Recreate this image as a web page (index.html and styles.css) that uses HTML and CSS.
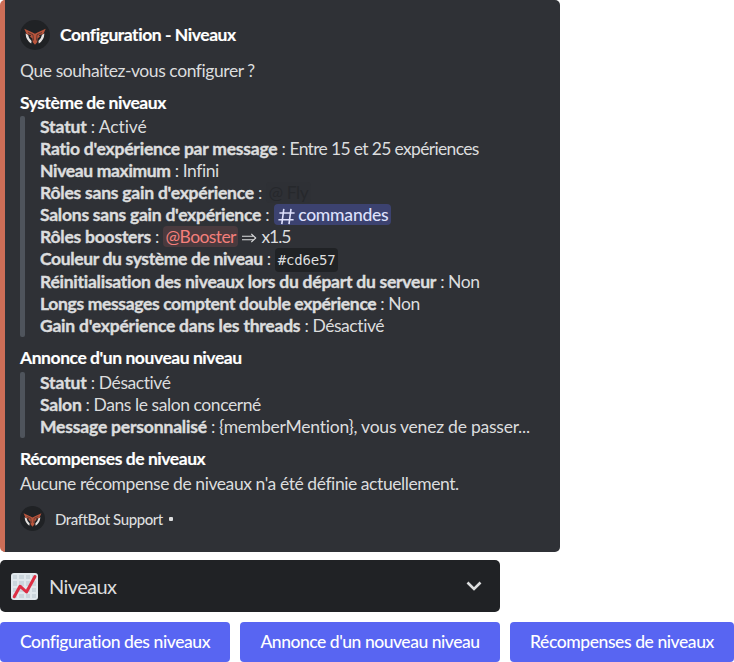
FILE: index.html
```html
<!DOCTYPE html>
<html lang="fr">
<head>
<meta charset="utf-8">
<title>Configuration - Niveaux</title>
<link rel="stylesheet" href="styles.css">
</head>
<body>
<svg class="defs" width="0" height="0">
  <symbol id="owl" viewBox="0 0 30 30">
    <circle cx="15" cy="15" r="15" fill="#202225"/>
    <path d="M5.6 13.5 Q5.8 20 11.2 23.6 L11.6 21 Q8.6 18.6 8 14.8Z M24.4 13.5 Q24.2 20 18.8 23.6 L18.4 21 Q21.4 18.6 22 14.8Z" fill="#e4e1df"/>
    <path d="M4.3 8.8 L12 12.2 L15 13.8 L18 12.2 L25.7 8.8 L23.4 14 L18.8 15.2 L20 16.6 L17.6 18.4 L17.2 22.2 L15 24.8 L12.8 22.2 L12.4 18.4 L10 16.6 L11.2 15.2 L6.6 14Z" fill="#b9553c"/>
    <path d="M8 12.5 L13 14.8 L13.5 20.5 M22 12.5 L17 14.8 L16.5 20.5" fill="none" stroke="#49302d" stroke-width=".8"/>
  </symbol>
</svg>
<section class="embed">
  <header class="author"><svg class="avatar"><use href="#owl"/></svg><span class="heading">Configuration - Niveaux</span></header>
  <p class="description">Que souhaitez-vous configurer ?</p>

  <h2 class="heading">Système de niveaux</h2>
  <div class="quote">
    <p><b class="loose">Statut</b> : <span class="loose">Activé</span></p>
    <p><b>Ratio d'expérience par message</b> : <span class="numeric">Entre 15 et 25 expériences</span></p>
    <p><b class="snug">Niveau maximum</b> : Infini</p>
    <p><b>Rôles sans gain d'expérience</b> : <span class="mention dark">@ Fly</span></p>
    <p><b class="even">Salons sans gain d'expérience</b> : <span class="mention channel"><svg class="hash" viewBox="0 0 17 17"><path d="M5.8 .8 3.8 16.2M13 .8 11 16.2M1.4 5H16.6M.4 11.8H15.6"/></svg>commandes</span></p>
    <p><b>Rôles boosters</b> : <span class="mention booster">@Booster</span> <svg class="implies" viewBox="0 0 15 10"><path d="M0 3.2H11.5M0 6.8H11.5M9.3 .8 13.7 5 9.3 9.2"/></svg> <span class="factor">x1.5</span></p>
    <p class="code-row"><b class="tight">Couleur du système de niveau</b> : <code>#cd6e57</code></p>
    <p><b class="even">Réinitialisation des niveaux lors du départ du serveur</b> : Non</p>
    <p><b class="tight">Longs messages comptent double expérience</b> : Non</p>
    <p><b>Gain d'expérience dans les threads</b> : Désactivé</p>
  </div>

  <h2 class="heading">Annonce d'un nouveau niveau</h2>
  <div class="quote lower">
    <p><b class="loose">Statut</b> : Désactivé</p>
    <p><b>Salon</b> : Dans le salon concerné</p>
    <p><b class="message">Message personnalisé</b> : <span class="template">{memberMention}, vous venez de passer...</span></p>
  </div>

  <h2 class="heading">Récompenses de niveaux</h2>
  <p class="empty">Aucune récompense de niveaux n'a été définie actuellement.</p>
  <footer><svg class="avatar small"><use href="#owl"/></svg><span>DraftBot Support</span><i class="dot"></i></footer>
</section>

<div class="select">
  <svg class="chart" viewBox="0 0 27 27">
    <rect width="27" height="27" rx="3" fill="#e1e8ed"/>
    <path d="M2 2h4v4H2zM8 2h5v4H8zM15 2h4v4h-4zM21 2h4v4h-4zM2 8h4v5H2zM8 8h5v5H8zM15 8h4v5h-4zM21 8h4v5h-4zM2 15h4v4H2zM8 15h5v4H8zM15 15h4v4h-4zM21 15h4v4h-4zM2 21h4v4H2zM8 21h5v4H8zM15 21h4v4h-4zM21 21h4v4h-4z" fill="#ccd6dd"/>
    <path d="M3.2 23.8 9 13.2 15.5 19 24 3.5" fill="none" stroke="#dd2e44" stroke-width="3" stroke-linecap="round" stroke-linejoin="round"/>
  </svg>
  <span class="choice">Niveaux</span>
  <svg class="chevron" viewBox="0 0 16 10"><path d="M1.5 1.5 8 8 14.5 1.5"/></svg>
</div>

<div class="buttons">
  <button>Configuration des niveaux</button>
  <button class="wide">Annonce d'un nouveau niveau</button>
  <button>Récompenses de niveaux</button>
</div>
</body>
</html>
```
FILE: styles.css
```css
* { box-sizing: border-box; }
body {
  margin: 0;
  width: 734px;
  background: #fff;
  color: #dcddde;
  font: 17.5px/22px Lato, "Open Sans", sans-serif;
  letter-spacing: -.43px;
  font-variant-ligatures: none;
}
p, h2 { margin: 0; white-space: nowrap; }
svg { display: block; flex: none; }
.defs { position: absolute; }

.embed {
  height: 552px;
  padding: 20px 15px 0;
  background: #2f3136;
  border-left: 5px solid #cd6e57;
  border-radius: 5px;
  width: 560px;
}
.author { display: flex; align-items: center; gap: 10px; height: 30px; }
.avatar { width: 30px; height: 30px; }
.heading { font-size: 17.5px; line-height: 22px; font-weight: 700; color: #fff; letter-spacing: -.45px; -webkit-text-stroke: .15px; }
.description { margin: 10px 0; }
.quote {
  position: relative;
  margin: 2px 0 10px;
  padding-left: 20px;
}
.lower { margin-top: 3px; }
.quote::before {
  content: "";
  position: absolute;
  inset: 0 auto 0 0;
  width: 5px;
  border-radius: 2px;
  background: #4f545c;
}
.quote p { height: 22px; }
.quote .code-row { height: 23px; }
b { letter-spacing: -.22px; -webkit-text-stroke: .4px; }
.loose { letter-spacing: -.1px; }
.even { letter-spacing: -.25px; }
.snug { letter-spacing: -.34px; }
.tight { letter-spacing: -.35px; }
.message { letter-spacing: -.18px; }
.numeric { letter-spacing: -.66px; }
.factor { letter-spacing: -1.1px; }
.template { letter-spacing: -.23px; }

.mention { display: inline-block; height: 21px; line-height: 21px; padding: 0 2.5px; border-radius: 4px; }
.dark { color: #26282c; background: #2e3035; }
.channel { color: #dee0fc; background: #3c4270; font-weight: 500; letter-spacing: -.22px; padding-left: 4px; margin-left: 1px; }
.booster { color: #f47f7b; background: #4a3a3e; letter-spacing: -.6px; }
.hash { display: inline-block; width: 17px; height: 17px; margin-right: 3px; vertical-align: -4px; }
.hash path { fill: none; stroke: currentColor; stroke-width: 1.6; }
.implies { display: inline-block; width: 15px; height: 10px; vertical-align: 0; }
.implies path { fill: none; stroke: #dcddde; stroke-width: 1.1; }
code {
  display: inline-block;
  height: 24px;
  padding: 0 3px;
  border-radius: 4px;
  background: #202225;
  font: 14px/24px "DejaVu Sans Mono", monospace;
  letter-spacing: -.2px;
}
.empty { margin-top: 3px; }
footer { display: flex; align-items: center; gap: 10px; margin-top: 11px; font-size: 15px; font-weight: 500; }
.small { width: 25px; height: 25px; }
.dot { width: 4px; height: 4px; margin-left: -4px; border-radius: 1px; background: #dcddde; }

.select {
  display: flex;
  align-items: center;
  width: 500px;
  height: 52px;
  margin-top: 8px;
  padding: 0 18px 0 11px;
  border-radius: 5px;
  background: #202225;
  font-size: 20px;
  letter-spacing: -.6px;
}
.chart { width: 27px; height: 27px; margin-right: 11px; }
.choice { margin-top: -1px; }
.chevron { width: 16px; height: 10px; margin-left: auto; }
.chevron path { fill: none; stroke: #dcddde; stroke-width: 2.6; }

.buttons { display: grid; grid-template-columns: 230px 260px 224px; gap: 10px; margin-top: 10px; }
button {
  height: 40px;
  padding: 0;
  border: 0;
  border-radius: 4px;
  background: #5865f2;
  color: #fff;
  font: inherit;
  font-weight: 500;
  letter-spacing: -.42px;
  white-space: nowrap;
}
.wide { letter-spacing: -.47px; }
```
